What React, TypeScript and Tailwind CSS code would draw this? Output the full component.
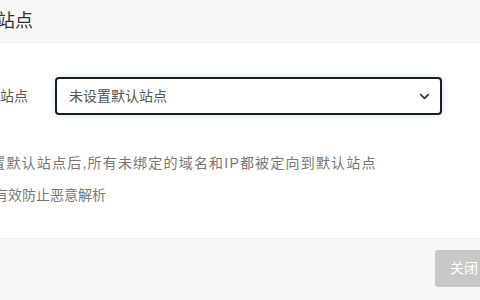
import React from 'react';
import { ChevronDown } from 'lucide-react';

export default function App() {
  return (
    <div className="w-[480px] h-[300px] overflow-hidden bg-white font-['Liberation_Sans','Noto_Sans_CJK_SC',sans-serif]">
      <div className="-ml-[60px] w-[568px] flex flex-col">
        {/* Title bar */}
        <div className="h-[43px] flex items-center pl-[21px] bg-[#f8f8f8] border-b border-[#eeeeee] text-[18px] text-[#333]">
          默认站点
        </div>

        {/* Body */}
        <div className="h-[195px] bg-white pt-[34px]">
          <div className="flex items-center">
            <label className="w-[115px] pr-[27px] text-right text-[14px] text-[#555]">默认站点</label>
            <div className="w-[387px] h-[38px] flex items-center justify-between pl-[12px] pr-[8px] border-2 border-[#1c1c1c] rounded-[4px] shadow-[0_0_6px_2px_rgba(100,160,230,0.18)] text-[14px] text-[#555]">
              <span>未设置默认站点</span>
              <ChevronDown size={15} strokeWidth={2.8} className="text-[#333]" />
            </div>
          </div>
          <ul className="pl-[40px] mt-[32px] text-[14px] text-[#777] leading-[32px]">
            <li className="-ml-[4px] tracking-[1.2px]">设置默认站点后,所有未绑定的域名和IP都被定向到默认站点</li>
            <li>可有效防止恶意解析</li>
          </ul>
        </div>

        {/* Footer */}
        <div className="h-[62px] bg-[#f6f7f7] border-t border-[#f0f0f0] flex justify-end items-start pt-[11px] pr-[15px]">
          <button className="w-[58px] h-[37px] rounded-[3px] bg-[#c8c8c8] text-white text-[14px]">关闭</button>
        </div>
      </div>
    </div>
  );
}
